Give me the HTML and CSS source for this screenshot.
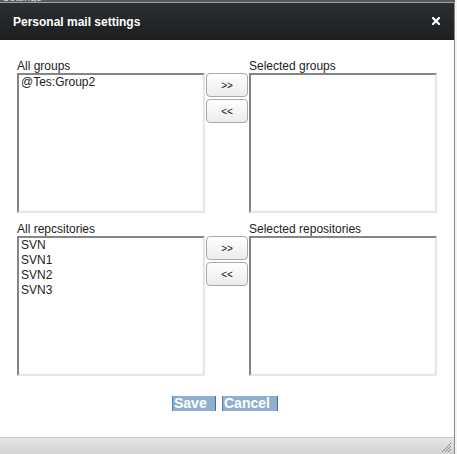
FILE: index.html
```html
<!DOCTYPE html>
<html>
<head>
<meta charset="utf-8">
<link rel="stylesheet" href="styles.css">
</head>
<body>
<div class="backdrop"><span class="backdrop-text">Settings</span></div>
<div class="dialog">
  <div class="titlebar">
    <span class="title">Personal mail settings</span>
    <svg class="close" width="8" height="8" viewBox="0 0 8 8"><path d="M1 1 L7 7 M7 1 L1 7" stroke="#fff" stroke-width="2.2" stroke-linecap="square"/></svg>
  </div>
  <div class="content">
    <div class="section">
      <div class="label">All groups</div>
      <div class="spacer"></div>
      <div class="label">Selected groups</div>
      <div class="listbox"><div class="item">@Tes:Group2</div></div>
      <div class="movers">
        <button class="mover">&gt;&gt;</button>
        <button class="mover">&lt;&lt;</button>
      </div>
      <div class="listbox"></div>
    </div>
    <div class="section second">
      <div class="label">All repcsitories</div>
      <div class="spacer"></div>
      <div class="label">Selected repositories</div>
      <div class="listbox">
        <div class="item">SVN</div>
        <div class="item">SVN1</div>
        <div class="item">SVN2</div>
        <div class="item">SVN3</div>
      </div>
      <div class="movers">
        <button class="mover">&gt;&gt;</button>
        <button class="mover">&lt;&lt;</button>
      </div>
      <div class="listbox"></div>
    </div>
    <div class="actions">
      <button class="action save">Save</button>
      <button class="action cancel">Cancel</button>
    </div>
  </div>
  <div class="footer">
    <svg class="grip" width="11" height="11" viewBox="0 0 11 11"><path d="M10 1 L1 10 M10 4 L4 10 M10 7 L7 10" stroke="#8c8c8c" stroke-width="1"/></svg>
  </div>
</div>
</body>
</html>
```
FILE: styles.css
```css
html, body {
  margin: 0;
  padding: 0;
  background: #f4f4f4;
  font-family: "Liberation Sans", Arial, sans-serif;
}
.backdrop {
  height: 2px;
  background: #5a5a5a;
  border-bottom: 1px solid #a0a0a0;
  overflow: hidden;
  width: 455px;
}
.backdrop-text {
  display: block;
  margin-left: 2px;
  margin-top: -9px;
  font-size: 11px;
  color: #ddd;
}
.dialog {
  width: 454px;
  border-right: 1px solid #8a8a8a;
  background: #fff;
  display: flex;
  flex-direction: column;
}
.titlebar {
  height: 37px;
  background: linear-gradient(#2c2f32, #1c1e20);
  display: flex;
  align-items: center;
  justify-content: space-between;
  padding: 0 13px 0 13px;
  box-sizing: border-box;
}
.title {
  color: #fff;
  font-weight: bold;
  font-size: 12px;
  margin-top: 1px;
}
.close {
  margin-right: 1px;
  margin-top: -1px;
}
.content {
  height: 397px;
  padding: 19px 0 0 17px;
  box-sizing: border-box;
}
.section {
  display: grid;
  grid-template-columns: 189px 43px 188px;
  grid-template-rows: 14px 140px;
}
.section.second {
  margin-top: 9px;
}
.label {
  font-size: 12px;
  line-height: 14px;
  color: #222;
  white-space: nowrap;
}
.listbox {
  box-sizing: border-box;
  width: 188px;
  height: 140px;
  border-style: solid;
  border-width: 2px;
  border-color: #858585 #e6e6e6 #e6e6e6 #858585;
  box-shadow: inset -1px -1px 0 #fafafa;
  padding: 0 0 0 2px;
  background: #fff;
}
.item {
  font-size: 12px;
  line-height: 15px;
  color: #222;
}
.movers {
  display: flex;
  flex-direction: column;
  gap: 2px;
  padding-left: 0;
}
.mover {
  width: 42px;
  height: 24px;
  margin-left: 0;
  padding: 0;
  border: 1px solid #a8a8a8;
  border-radius: 4px;
  background: linear-gradient(#ffffff, #ececec);
  font-family: "Liberation Sans", Arial, sans-serif;
  font-size: 10px;
  color: #111;
}
.actions {
  display: flex;
  gap: 6px;
  margin-top: 20px;
  padding-left: 155px;
}
.action {
  height: 15px;
  padding: 0 0 0 1px;
  margin: 0;
  border: none;
  border-left: 1px solid #5f82ab;
  border-right: 1px solid #4d6a8c;
  background: #8fafd0;
  color: #fff;
  font-family: "Liberation Sans", Arial, sans-serif;
  font-weight: bold;
  font-size: 14px;
  line-height: 15px;
  text-align: left;
}
.save { width: 44px; }
.cancel { width: 56px; }
.footer {
  height: 17px;
  border-top: 1px solid #cbcbcb;
  background: linear-gradient(#e4e4e4, #d2d2d2);
  display: flex;
  justify-content: flex-end;
  align-items: flex-end;
}
.grip {
  margin: 0 2px 2px 0;
}
```
